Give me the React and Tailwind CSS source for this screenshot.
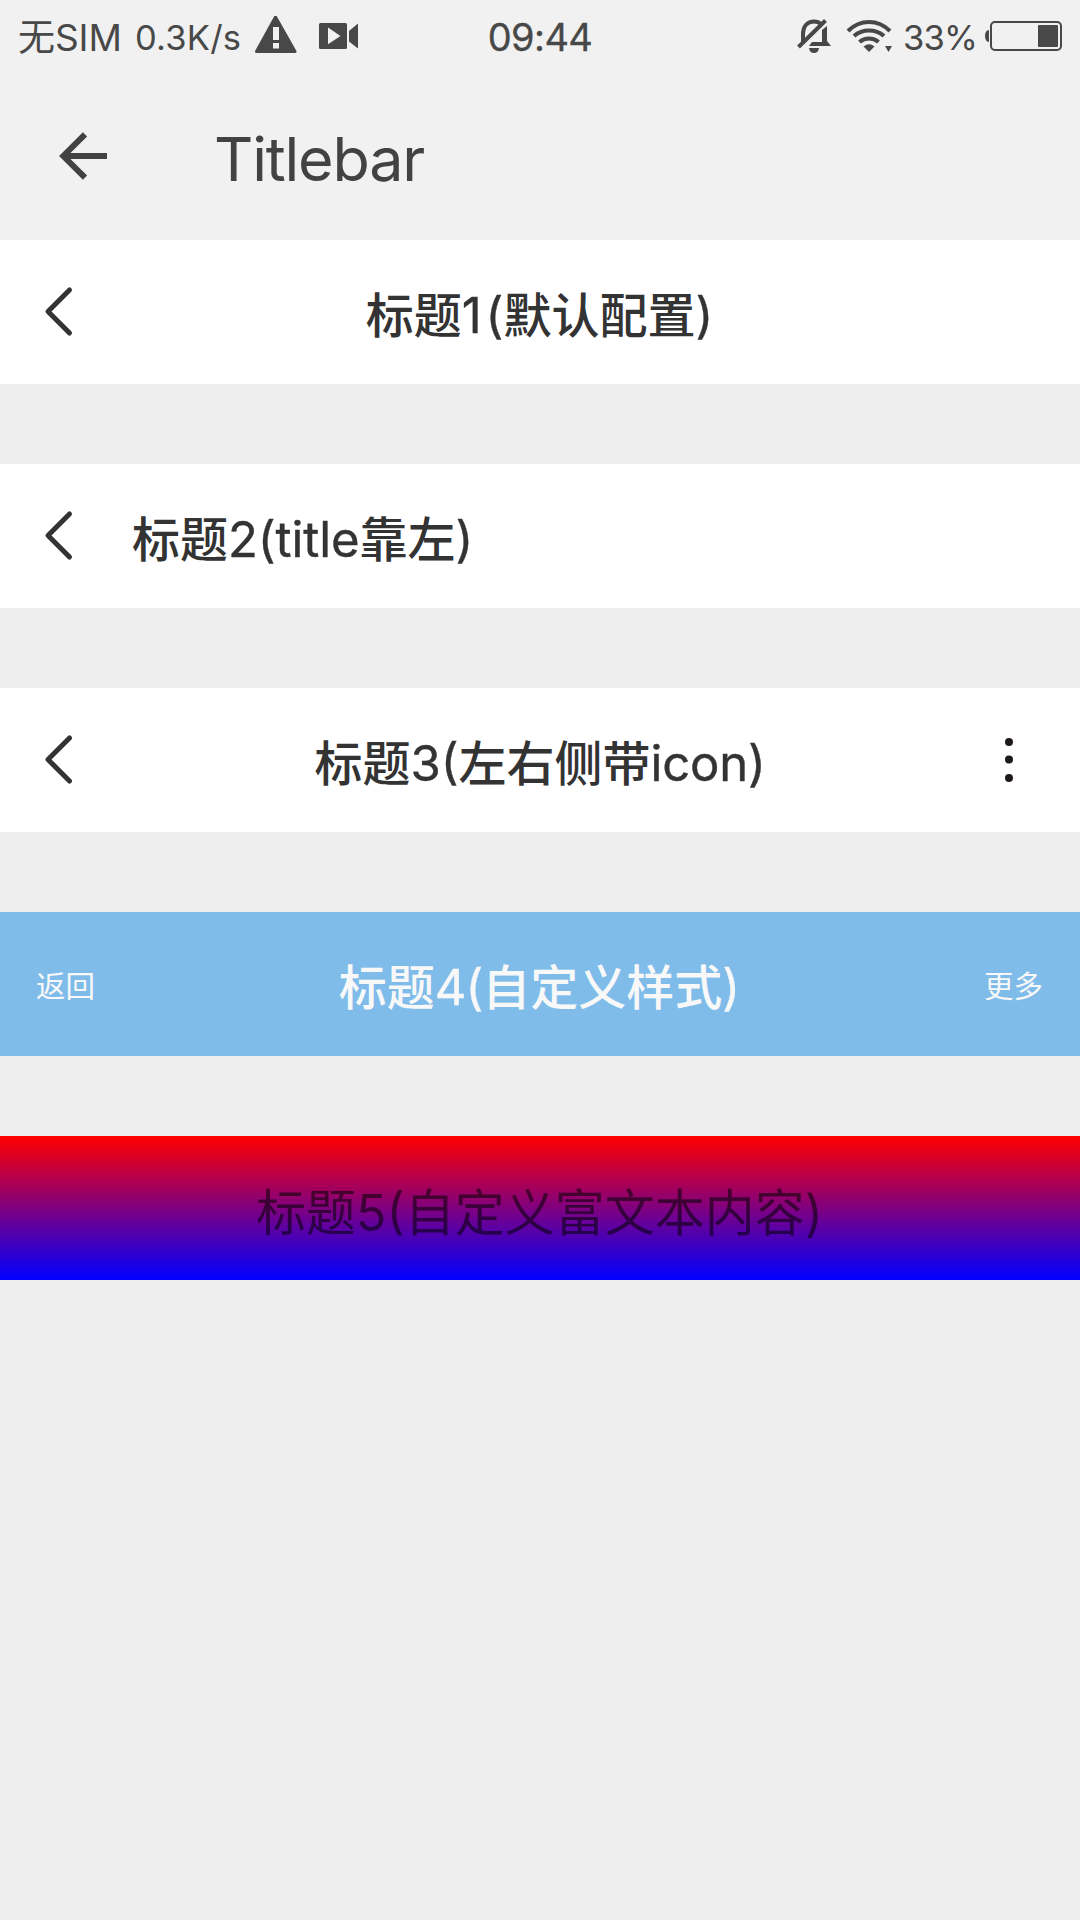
import React from "react";

const FONT = "font-['Inter','Noto_Sans_CJK_SC',sans-serif]";

function BackChevron() {
  return (
    <svg width="40" height="60" viewBox="0 0 40 60" fill="none" stroke="#333333" strokeWidth="5" strokeLinecap="round" strokeLinejoin="round">
      <path d="M29.5 8L8 29.500L29.5 51" />
    </svg>
  );
}

function StatusBar() {
  return (
    <div className="grid h-[72px] grid-cols-3 items-center text-[#484848]">
      <div className="flex items-center pl-[18px] whitespace-nowrap">
        <span className="w-[117px] pt-[3px] text-[37px] leading-[69px] tracking-[-0.1px]">无SIM</span>
        <span className="w-[119px] pt-[3px] text-[34.500px] leading-[69px] tracking-[0.2px]">0.3K/s</span>
        <svg className="shrink-0" width="44" height="40" viewBox="254 16 44 40">
          <path d="M275.5 17L295 51.500H256.500Z" fill="#484848" stroke="#484848" strokeWidth="3" strokeLinejoin="round" />
          <path d="M273 27h6v13h-6zM273 43h6v5.500h-6z" fill="#f1f1f1" />
        </svg>
        <svg className="ml-[20px] shrink-0" width="42" height="40" viewBox="318 16 42 40">
          <path d="M319 24.500q0-1.500 1.500-1.500H345.500q1.500 0 1.500 1.500V47.500q0 1.500-1.500 1.500H320.500q-1.500 0-1.500-1.500Z" fill="#484848" />
          <path d="M328 27.500L340.500 36L328 44.300Z" fill="#f1f1f1" />
          <path d="M349 31L358 23.500V48.500L349 41.500Z" fill="#484848" />
        </svg>
      </div>
      <div className="pt-[3px] text-center text-[38px] leading-[69px] tracking-[-0.6px] [-webkit-text-stroke:0.3px_#484848]">09:44</div>
      <div className="flex items-center justify-end pr-[16px] whitespace-nowrap">
        <svg className="shrink-0" width="36" height="40" viewBox="796 16 36 40" fill="none" stroke="#484848" strokeWidth="4">
          <path d="M803 42V34C803 26 807.500 21.500 814 21.500C817 21.500 819 22.300 820.500 23.500" />
          <path d="M798.500 47L825.500 20.500" />
          <path d="M822 30L827 26V41L831 46H809L812 42H822Z" fill="#484848" stroke="none" />
          <path d="M809 48H819Q818.500 53 814 53Q809.500 53 809 48Z" fill="#484848" stroke="none" />
        </svg>
        <svg className="ml-[14px] shrink-0" width="46" height="40" viewBox="846 16 46 40" fill="none" stroke="#484848" strokeWidth="4.200">
          <path d="M848 31Q857 22 869 22Q881 22 890 31" />
          <path d="M854 36Q860.500 30.500 869 30.500Q877.500 30.500 884 36" />
          <path d="M859.500 42Q863.500 38.500 869 38.500Q874.500 38.500 878.500 42" />
          <path d="M863.500 46.500Q869 42 874.500 46.500L869 52Z" fill="#484848" stroke="none" />
          <path d="M885 46H892L888.500 52Z" fill="#484848" stroke="none" />
        </svg>
        <span className="ml-[11px] w-[82px] pt-[3px] text-[34.500px] leading-[69px] tracking-[-0.8px]">33%</span>
        <svg className="shrink-0" width="79" height="32" viewBox="985 20 79 32">
          <path d="M989 30Q985 30.500 985 36Q985 41.500 989 42Z" fill="#484848" />
          <rect x="991" y="22" width="70" height="28" rx="4" fill="none" stroke="#484848" strokeWidth="2" />
          <rect x="1038" y="25" width="20" height="22" rx="1" fill="#484848" />
        </svg>
      </div>
    </div>
  );
}

function AppHeader() {
  return (
    <div className="flex h-[168px] items-center">
      <svg className="ml-[56px] shrink-0" width="56" height="56" viewBox="56 128 56 56" fill="none" stroke="#424242" strokeWidth="6">
        <path d="M107 156H63M85 134.300L63.300 156L85 177.700" />
      </svg>
      <h1 className="ml-[102px] pt-[5px] text-[61px] font-normal leading-[80px] tracking-[-1.200px] text-[#424242]">Titlebar</h1>
    </div>
  );
}

function Bar({ className = "", left, right, children }) {
  return (
    <div className={`grid h-[144px] grid-cols-[132px_1fr_132px] items-center whitespace-nowrap ${className}`}>
      <div className="flex items-center">{left}</div>
      {children}
      <div className="flex items-center justify-end">{right}</div>
    </div>
  );
}

// Latin runs in a title are lighter than the Chinese characters around them.
function Latin({ className = "", children }) {
  return <span className={`text-[49px] font-normal [-webkit-text-stroke:0.4px_currentColor] ${className}`}>{children}</span>;
}

const chevron = <div className="ml-[40px]"><BackChevron /></div>;

const dots = (
  <svg className="mr-[57px]" width="28" height="48" viewBox="0 0 28 48" fill="#1f1a1a">
    <circle cx="14" cy="6" r="4" />
    <circle cx="14" cy="23.500" r="4" />
    <circle cx="14" cy="42" r="4" />
  </svg>
);

export default function App() {
  return (
    <div className={`min-h-[1920px] w-[1080px] bg-[#eeeeee] ${FONT}`}>
      <header className="bg-[#f1f1f1]">
        <StatusBar />
        <AppHeader />
      </header>
      <main className="flex flex-col gap-20">
        <Bar className="bg-white" left={chevron}>
          <div className="pt-[8px] pr-[1px] text-center text-[48px] font-medium leading-[72px] text-[#333333]">标题<Latin className="pr-[4px]">1</Latin><Latin>(</Latin>默认配置<Latin>)</Latin></div>
        </Bar>
        <Bar className="bg-white" left={chevron}>
          <div className="pt-[8px] text-left text-[48px] font-medium leading-[72px] text-[#333333]">标题<Latin className="tracking-[-0.1px]">2(title</Latin>靠左<Latin>)</Latin></div>
        </Bar>
        <Bar className="bg-white" left={chevron} right={dots}>
          <div className="pt-[8px] text-center text-[48px] font-medium leading-[72px] text-[#333333]">标题<Latin>3(</Latin>左右侧带<Latin className="tracking-[-0.2px]">icon)</Latin></div>
        </Bar>
        <Bar
          className="bg-[#7fbcea]"
          left={<span className="ml-[36px] pt-[4px] text-[29.500px] leading-[44px] text-[#f8f8f8]">返回</span>}
          right={<span className="mr-[37px] pt-[4px] text-[29.500px] leading-[44px] text-[#f8f8f8]">更多</span>}
        >
          <div className="pt-[8px] pr-[1px] text-center text-[48px] font-medium leading-[72px] text-[#f8f8f8]">标题<Latin className="tracking-[-1px]">4(</Latin>自定义样式<Latin>)</Latin></div>
        </Bar>
        <Bar className="bg-linear-to-b/srgb from-[#ff0000] to-[#0000ff]">
          <div className="pt-[9px] pr-[1px] text-center text-[50px] font-normal leading-[72px] text-black/55">标题5(自定义富文本内容)</div>
        </Bar>
      </main>
    </div>
  );
}
